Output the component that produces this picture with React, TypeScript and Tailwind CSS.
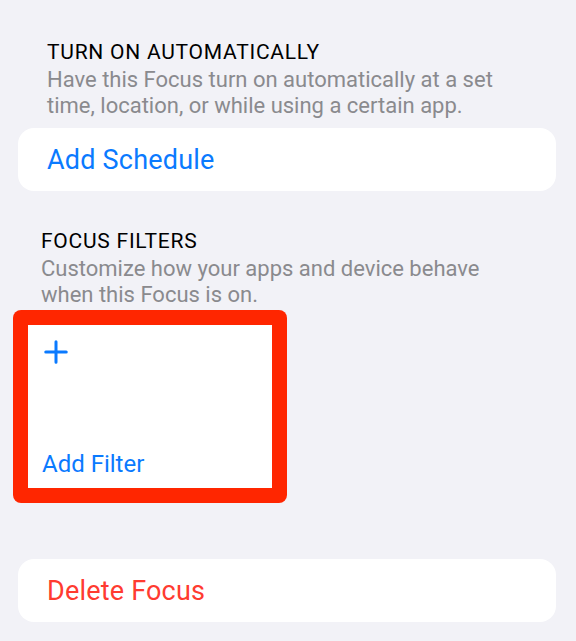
const font = { fontFamily: "Roboto, 'Noto Sans', sans-serif" }

function SectionHeader({ title, note, indent }: { title: string; note: string[]; indent: string }) {
  return (
    <div className={`${indent} flex flex-col`}>
      <h2 className="text-[21px] leading-[24px] font-normal text-black tracking-[0.75px]">{title}</h2>
      <p className="mt-[3px] text-[22px] leading-[26px] text-[#8a8a8e]">
        {note.map((line) => (
          <span key={line} className="block">
            {line}
          </span>
        ))}
      </p>
    </div>
  )
}

function RowButton({ label, tone }: { label: string; tone: "blue" | "red" }) {
  return (
    <button
      type="button"
      className="ml-[18px] w-[538px] h-[63px] bg-white rounded-[16px] flex items-center pl-[29px] text-left"
    >
      <span
        className={`text-[27px] leading-[30px] tracking-[0.2px] ${tone === "blue" ? "text-[#0a7aff]" : "text-[#ff3b30]"}`}
      >
        {label}
      </span>
    </button>
  )
}

export default function App() {
  return (
    <div className="min-h-[641px] w-[576px] bg-[#f2f2f7] flex flex-col pt-[40px]" style={font}>
      <SectionHeader
        indent="ml-[47px]"
        title="TURN ON AUTOMATICALLY"
        note={["Have this Focus turn on automatically at a set", "time, location, or while using a certain app."]}
      />

      <div className="mt-[9px]">
        <RowButton label="Add Schedule" tone="blue" />
      </div>

      <div className="mt-[38px]">
        <SectionHeader
          indent="ml-[41px]"
          title="FOCUS FILTERS"
          note={["Customize how your apps and device behave", "when this Focus is on."]}
        />
      </div>

      {/* filter tile, outlined */}
      <div className="mt-[2px] ml-[13px] w-[274px] h-[193px] rounded-[8px] bg-[#ff2600] p-[15px]">
        <div className="h-full bg-white flex flex-col justify-between pt-[15px] pb-[10px]">
          <svg className="ml-[16px]" width="24" height="24" viewBox="0 0 24 24" fill="none">
            <path d="M12 1.75v20.5M1.75 12h20.5" stroke="#0a7aff" strokeWidth="3" strokeLinecap="round" />
          </svg>
          <span className="ml-[14px] text-[24px] leading-[28px] text-[#0a7aff]">Add Filter</span>
        </div>
      </div>

      <div className="mt-[56px]">
        <RowButton label="Delete Focus" tone="red" />
      </div>
    </div>
  )
}
